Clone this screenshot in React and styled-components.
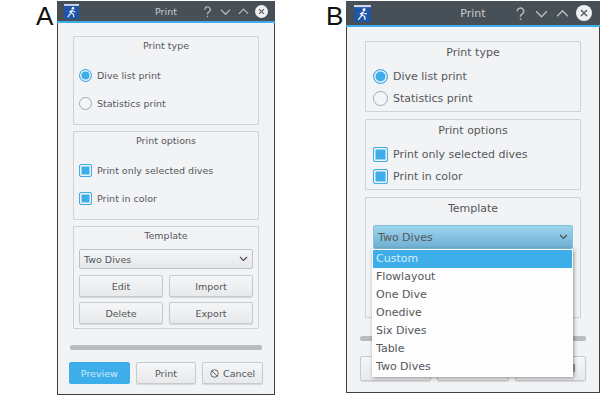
import React from 'react';
import styled, { createGlobalStyle, ThemeProvider } from 'styled-components';

// sizes of the two dialogs, the second one is the same dialog shown bigger
const small = {
  width: 218, font: 9.5, titleBar: 22, titlePad: 52, barPad: 7, iconSize: 15, bodyTop: 13, sideGap: 16, groupGap: 6,
  groupTitle: 18, rowHeight: 28, rowsTop: 6, rowsBottom: 7, rowGap: 5, mark: 13, innerPad: 5,
  comboTop: 4, comboHeight: 20, buttonHeight: 22, buttonGap: 5, templateHeight: 103,
  barTop: 16, barSide: 13, footerTop: 12, footerHeight: 22, footerSide: 12, footerGap: 6, bottom: 10,
  controls: 13, controlGap: 5, closeSize: 13,
};
const big = {
  width: 254, font: 11, titleBar: 26, titlePad: 62, barPad: 8, iconSize: 17, bodyTop: 14, sideGap: 19, groupGap: 7,
  groupTitle: 22, rowHeight: 22, rowsTop: 1, rowsBottom: 2, rowGap: 5, mark: 15, innerPad: 7,
  comboTop: 5, comboHeight: 24, buttonHeight: 24, buttonGap: 5, templateHeight: 121,
  barTop: 18, barSide: 14, footerTop: 15, footerHeight: 25, footerSide: 14, footerGap: 6, bottom: 11,
  controls: 15, controlGap: 6, closeSize: 16,
};

const GlobalStyle = createGlobalStyle`
  html, body {
    margin: 0;
    width: 600px;
    height: 400px;
    overflow: hidden;
    background: #fff;
  }
  * { box-sizing: border-box; }
`;

const Page = styled.div`
  display: flex;
  height: 400px;
  padding-top: 1px;
`;

const Panel = styled.section`
  display: flex;
  align-items: flex-start;
  margin-left: ${p => p.$left}px;
`;

const Letter = styled.div`
  width: ${p => p.$width}px;
  font: 26px/30px "Liberation Sans", Arial, sans-serif;
  color: #111;
`;

const Window = styled.div`
  width: ${p => p.theme.width}px;
  background: #f2f3f5;
  border: 1px solid #3a4046;
  border-top: 0;
  padding-bottom: ${p => p.theme.bottom}px;
  font-family: "DejaVu Sans", sans-serif;
  font-size: ${p => p.theme.font}px;
  color: #54575a;
`;

const TitleBar = styled.header`
  display: flex;
  align-items: center;
  height: ${p => p.theme.titleBar}px;
  margin: 0 -1px;
  padding: 0 ${p => p.theme.barPad}px;
  background: #475057;
  border-bottom: 2px solid #3daee9;
  color: #c8ccce;
`;

const WindowTitle = styled.span`
  flex: 1;
  text-align: center;
  padding-left: ${p => p.theme.titlePad}px;
`;

const TitleIcons = styled.div`
  display: flex;
  align-items: center;
  gap: ${p => p.theme.controlGap}px;
`;

const ControlSvg = styled.svg`
  width: ${p => p.theme.controls}px;
  height: ${p => p.theme.controls}px;
  fill: none;
  stroke: #b9bdc0;
  stroke-width: 1.3;
`;

const CloseSvg = styled.svg`
  width: ${p => p.theme.closeSize}px;
  height: ${p => p.theme.closeSize}px;
`;

const AppIconSvg = styled.svg`
  width: ${p => p.theme.iconSize}px;
  height: ${p => p.theme.iconSize}px;
  display: block;
`;

const Body = styled.div`
  display: flex;
  flex-direction: column;
  gap: ${p => p.theme.groupGap}px;
  padding: ${p => p.theme.bodyTop}px ${p => p.theme.sideGap - 1}px 0;
`;

const Group = styled.fieldset`
  margin: 0;
  padding: 0 ${p => p.theme.innerPad}px;
  min-width: 0;
  border: 1px solid #cfd1d4;
  border-radius: 1px;
  display: flex;
  flex-direction: column;
`;

const RowsGroup = styled(Group)`
  padding-bottom: ${p => p.theme.rowsBottom}px;
`;

const TemplateGroup = styled(Group)`
  height: ${p => p.theme.templateHeight}px;
`;

const GroupTitle = styled.div`
  height: ${p => p.theme.groupTitle}px;
  line-height: ${p => p.theme.groupTitle}px;
  text-align: center;
`;

const Rows = styled.div`
  padding-top: ${p => p.theme.rowsTop}px;
`;

const Row = styled.div`
  display: flex;
  align-items: center;
  gap: ${p => p.theme.rowGap}px;
  height: ${p => p.theme.rowHeight}px;
`;

const Radio = styled.span`
  width: ${p => p.theme.mark}px;
  height: ${p => p.theme.mark}px;
  border-radius: 50%;
  flex: none;
  border: 1px solid ${p => p.$on ? '#3daee9' : '#a4a7aa'};
  background: ${p => p.$on ? '#3daee9' : '#f4f5f6'};
  box-shadow: ${p => p.$on ? 'inset 0 0 0 1.5px #f2f3f5' : 'none'};
`;

const Check = styled.span`
  width: ${p => p.theme.mark}px;
  height: ${p => p.theme.mark}px;
  border-radius: 2px;
  flex: none;
  border: 1px solid #3daee9;
  background: #3daee9;
  box-shadow: inset 0 0 0 1.5px #f2f3f5;
`;

const ComboWrap = styled.div`
  position: relative;
  z-index: 2;
  margin-top: ${p => p.theme.comboTop}px;
`;

const Combo = styled.div`
  display: flex;
  align-items: center;
  justify-content: space-between;
  height: ${p => p.theme.comboHeight}px;
  padding: 0 4px;
  border: 1px solid ${p => p.$open ? '#86c2df' : '#bfc1c4'};
  border-radius: 2px;
  background: ${p => p.$open ? 'linear-gradient(#9dd5ef, #6eafd2)' : 'linear-gradient(#f5f6f7, #e6e7e9)'};
`;

const ComboArrow = styled.svg`
  width: 9px;
  height: 6px;
  fill: none;
  stroke: #4a4c4f;
  stroke-width: 1.2;
`;

const Menu = styled.ul`
  position: absolute;
  left: -1px;
  top: 100%;
  width: 201px;
  margin: 0;
  padding: 1px 1px 1px 0;
  list-style: none;
  background: #fdfdfd;
  box-shadow: 1px 1px 4px rgba(0, 0, 0, 0.4);
`;

const MenuItem = styled.li`
  height: 18px;
  line-height: 18px;
  padding-left: 3px;
  margin-left: 1px;
  background: ${p => p.$active ? '#3daee9' : 'transparent'};
  color: ${p => p.$active ? '#d6eefb' : 'inherit'};
`;

const ButtonGrid = styled.div`
  display: grid;
  grid-template-columns: 1fr 1fr;
  gap: ${p => p.theme.buttonGap}px 6px;
  margin-top: 6px;
`;

const Button = styled.button`
  height: ${p => p.$tall ? p.theme.footerHeight : p.theme.buttonHeight}px;
  padding: 0;
  display: flex;
  align-items: center;
  justify-content: center;
  gap: 4px;
  font: inherit;
  color: ${p => p.$primary ? '#cfeafa' : 'inherit'};
  border: 1px solid ${p => p.$primary ? '#3daee9' : '#c8cacd'};
  border-radius: 2px;
  background: ${p => p.$primary ? '#3daee9' : 'linear-gradient(#f5f6f7, #e8e9eb)'};
  box-shadow: ${p => p.$primary ? 'none' : '0 1px 1px rgba(0, 0, 0, 0.12)'};
`;

const Bar = styled.div`
  height: 5px;
  margin: ${p => p.theme.barTop}px ${p => p.theme.barSide - 1}px ${p => p.theme.footerTop}px;
  border-radius: 2px;
  background: #b9bcbe;
`;

const Footer = styled.footer`
  display: grid;
  grid-template-columns: repeat(3, 1fr);
  gap: ${p => p.theme.footerGap}px;
  padding: 0 ${p => p.theme.footerSide - 1}px;
`;

const CancelSvg = styled.svg`
  width: 9px;
  height: 9px;
  fill: none;
  stroke: #54575a;
  stroke-width: 1;
`;

function AppIcon() {
  return (
    <AppIconSvg viewBox="0 0 16 16">
      <rect width="16" height="16" fill="#1f55a8" />
      <rect width="16" height="2" fill="#cfd8e6" />
      <circle cx="9.5" cy="4.5" r="1.4" fill="#fff" />
      <path d="M9 6 L7 10 L4 14 M7.5 9 L10 11 L10.5 14 M8.5 7 L12 8.5 M8.5 7 L5.5 8.5" stroke="#e8eef7" strokeWidth="1.3" fill="none" />
    </AppIconSvg>
  );
}

function TitleControls() {
  return (
    <TitleIcons>
      <ControlSvg viewBox="0 0 14 14">
        <path d="M4 5 A3 3 0 1 1 8.5 7.5 L7 9 V10" />
        <path d="M7 11.5 V13" />
      </ControlSvg>
      <ControlSvg viewBox="0 0 14 14"><path d="M2 5 L7 10 L12 5" /></ControlSvg>
      <ControlSvg viewBox="0 0 14 14"><path d="M2 9.5 L7 4.5 L12 9.5" /></ControlSvg>
      <CloseSvg viewBox="0 0 16 16">
        <circle cx="8" cy="8" r="8" fill="#eff0f1" />
        <path d="M5 5 L11 11 M11 5 L5 11" stroke="#5b6268" strokeWidth="1.5" />
      </CloseSvg>
    </TitleIcons>
  );
}

const templates = ['Custom', 'Flowlayout', 'One Dive', 'Onedive', 'Six Dives', 'Table', 'Two Dives'];

function PrintDialog({ open }) {
  return (
    <Window>
      <TitleBar>
        <AppIcon />
        <WindowTitle>Print</WindowTitle>
        <TitleControls />
      </TitleBar>
      <Body>
        <RowsGroup>
          <GroupTitle>Print type</GroupTitle>
          <Rows>
            <Row><Radio $on />Dive list print</Row>
            <Row><Radio />Statistics print</Row>
          </Rows>
        </RowsGroup>
        <RowsGroup>
          <GroupTitle>Print options</GroupTitle>
          <Rows>
            <Row><Check />Print only selected dives</Row>
            <Row><Check />Print in color</Row>
          </Rows>
        </RowsGroup>
        <TemplateGroup>
          <GroupTitle>Template</GroupTitle>
          <ComboWrap>
            <Combo $open={open}>
              Two Dives
              <ComboArrow viewBox="0 0 9 6"><path d="M1 1 L4.5 4.5 L8 1" /></ComboArrow>
            </Combo>
            {open && (
              <Menu>
                {templates.map((t, i) => <MenuItem key={t} $active={i === 0}>{t}</MenuItem>)}
              </Menu>
            )}
          </ComboWrap>
          {/* the open list covers these buttons */}
          {!open && (
            <ButtonGrid>
              <Button>Edit</Button>
              <Button>Import</Button>
              <Button>Delete</Button>
              <Button>Export</Button>
            </ButtonGrid>
          )}
        </TemplateGroup>
      </Body>
      <Bar />
      <Footer>
        <Button $tall $primary={!open}>{!open && 'Preview'}</Button>
        <Button $tall>{!open && 'Print'}</Button>
        <Button $tall>
          <CancelSvg viewBox="0 0 10 10">
            <circle cx="5" cy="5" r="4.2" />
            <path d="M2 2 L8 8" />
          </CancelSvg>
          Cancel
        </Button>
      </Footer>
    </Window>
  );
}

export default function App() {
  return (
    <>
      <GlobalStyle />
      <Page>
        <Panel $left={36}>
          <Letter $width={21}>A</Letter>
          <ThemeProvider theme={small}><PrintDialog /></ThemeProvider>
        </Panel>
        <Panel $left={51}>
          <Letter $width={20}>B</Letter>
          <ThemeProvider theme={big}><PrintDialog open /></ThemeProvider>
        </Panel>
      </Page>
    </>
  );
}
